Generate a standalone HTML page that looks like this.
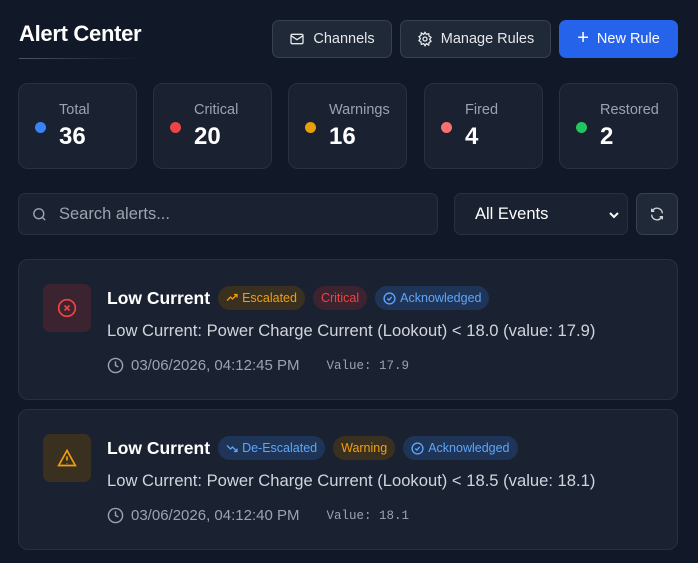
<!DOCTYPE html><html><head><style>
*{box-sizing:border-box;margin:0;padding:0}
body{width:698px;height:563px;background:#111827;font-family:"Liberation Sans",sans-serif;color:#e5e7eb;position:relative;overflow:hidden}
.abs{position:absolute}
.btn{position:absolute;top:20px;height:38px;border:1px solid #374151;background:#1f2937;border-radius:7px;display:flex;align-items:center;justify-content:center;gap:8px;font-size:14.5px;color:#e5e7eb}
.stat{position:absolute;top:83px;height:86px;width:119px;background:#1a2130;border:1px solid #273140;border-radius:10px}
.stat .dot{position:absolute;left:16px;top:38px;width:11px;height:11px;border-radius:50%}
.stat .l{position:absolute;left:40px;top:18px;font-size:14.5px;color:#9ca3af}
.stat .n{position:absolute;left:40px;top:39px;font-size:24px;font-weight:bold;color:#fff}
.card{position:absolute;left:18px;width:660px;height:141px;background:#1a2130;border:1px solid #273140;border-radius:10px}
.ib{position:absolute;left:24px;top:24px;width:48px;height:48px;border-radius:7px;display:flex;align-items:center;justify-content:center}
.t{position:absolute;left:88px;top:26px;display:flex;align-items:center;gap:8px}
.t b{font-size:17.5px;color:#fff;margin-right:0}
.pill{height:24px;border-radius:12px;padding:0 8px;font-size:12.5px;display:flex;align-items:center;gap:4px}
.d{position:absolute;left:88px;top:61px;font-size:16.6px;color:#d1d5db}
.m{position:absolute;left:88px;top:97px;font-size:15px;color:#9ca3af;display:flex;align-items:center;gap:7px}
.m code{font-family:"Liberation Mono",monospace;font-size:12.5px;margin-left:20px}
</style></head><body>
<div class="abs" style="left:19px;top:21px;font-size:22px;font-weight:bold;color:#fff;letter-spacing:-0.3px">Alert Center</div>
<div class="abs" style="left:19px;top:58px;width:122px;height:1px;background:linear-gradient(90deg,#4b5563,#111827)"></div>
<div class="btn" style="left:272px;width:120px"><svg width="16" height="16" viewBox="0 0 24 24" fill="none" stroke="#e5e7eb" stroke-width="2"><rect x="3" y="5" width="18" height="14" rx="2"/><path d="M3 7l9 6 9-6"/></svg>Channels</div>
<div class="btn" style="left:400px;width:151px"><svg width="16" height="16" viewBox="0 0 24 24" fill="none" stroke="#e5e7eb" stroke-width="2"><circle cx="12" cy="12" r="3"/><path d="M12 2l2 3 3.5-1 .5 3.5 3 2-2 3 2 3-3 2-.5 3.5L14 19l-2 3-2-3-3.5 1L6 16.5l-3-2 2-3-2-3 3-2L6.5 3 10 5z"/></svg>Manage Rules</div>
<div class="btn" style="left:559px;width:119px;background:#2563eb;border-color:#2563eb;color:#fff"><span style="font-size:20px;line-height:1;margin-top:-2px">+</span>New Rule</div>

<div class="stat" style="left:18px"><div class="dot" style="background:#3b82f6"></div><div class="l">Total</div><div class="n">36</div></div>
<div class="stat" style="left:153px"><div class="dot" style="background:#ef4444"></div><div class="l">Critical</div><div class="n">20</div></div>
<div class="stat" style="left:288px"><div class="dot" style="background:#e5a00d"></div><div class="l">Warnings</div><div class="n">16</div></div>
<div class="stat" style="left:424px"><div class="dot" style="background:#f87171"></div><div class="l">Fired</div><div class="n">4</div></div>
<div class="stat" style="left:559px"><div class="dot" style="background:#22c55e"></div><div class="l">Restored</div><div class="n">2</div></div>

<div class="abs" style="left:18px;top:193px;width:420px;height:42px;background:#1a2130;border:1px solid #273140;border-radius:7px"><svg class="abs" style="left:12px;top:12px" width="17" height="17" viewBox="0 0 24 24" fill="none" stroke="#9ca3af" stroke-width="2"><circle cx="11" cy="11" r="7"/><path d="M20 20l-4-4"/></svg><span class="abs" style="left:40px;top:11px;font-size:16.5px;color:#9ca3af">Search alerts...</span></div>
<div class="abs" style="left:454px;top:193px;width:174px;height:42px;background:#1a2130;border:1px solid #273140;border-radius:7px"><span class="abs" style="left:20px;top:11px;font-size:16.5px;color:#fff">All Events</span><svg class="abs" style="left:154px;top:17px" width="10" height="8" viewBox="0 0 10 8"><path d="M1 2l4 4 4-4" fill="none" stroke="#fff" stroke-width="2"/></svg></div>
<div class="abs" style="left:636px;top:193px;width:42px;height:42px;background:#1f2937;border:1px solid #374151;border-radius:7px;display:flex;align-items:center;justify-content:center"><svg width="16" height="16" viewBox="0 0 24 24" fill="none" stroke="#d1d5db" stroke-width="2"><path d="M20 11a8 8 0 0 0-14-5L4 8M4 4v4h4M4 13a8 8 0 0 0 14 5l2-2M20 20v-4h-4"/></svg></div>

<div class="card" style="top:259px">
<div class="ib" style="background:#3b2330"><svg width="20" height="20" viewBox="0 0 24 24" fill="none" stroke="#ef4444" stroke-width="2"><circle cx="12" cy="12" r="10"/><path d="M9 9l6 6M15 9l-6 6"/></svg></div>
<div class="t"><b>Low Current</b><span class="pill" style="background:#3a3020;color:#f59e0b"><svg width="12" height="12" viewBox="0 0 24 24" fill="none" stroke="#f59e0b" stroke-width="2.5"><path d="M2 17l7-7 4 4 9-9M16 5h6v6"/></svg>Escalated</span><span class="pill" style="background:#3b2330;color:#ef4444">Critical</span><span class="pill" style="background:#1e3558;color:#60a5fa"><svg width="13" height="13" viewBox="0 0 24 24" fill="none" stroke="#60a5fa" stroke-width="2.5"><circle cx="12" cy="12" r="10"/><path d="M8 12l3 3 5-6"/></svg>Acknowledged</span></div>
<div class="d">Low Current: Power Charge Current (Lookout) &lt; 18.0 (value: 17.9)</div>
<div class="m"><svg width="17" height="17" viewBox="0 0 24 24" fill="none" stroke="#9ca3af" stroke-width="2"><circle cx="12" cy="12" r="10"/><path d="M12 6v6l4 2"/></svg>03/06/2026, 04:12:45 PM<code>Value: 17.9</code></div>
</div>
<div class="card" style="top:409px">
<div class="ib" style="background:#3a3020"><svg width="20" height="20" viewBox="0 0 24 24" fill="none" stroke="#f59e0b" stroke-width="2"><path d="M12 3L2 21h20z"/><path d="M12 10v5M12 18v.5"/></svg></div>
<div class="t"><b>Low Current</b><span class="pill" style="background:#1e3558;color:#60a5fa"><svg width="12" height="12" viewBox="0 0 24 24" fill="none" stroke="#60a5fa" stroke-width="2.5"><path d="M2 7l7 7 4-4 9 9M16 19h6v-6"/></svg>De-Escalated</span><span class="pill" style="background:#3a3020;color:#f59e0b">Warning</span><span class="pill" style="background:#1e3558;color:#60a5fa"><svg width="13" height="13" viewBox="0 0 24 24" fill="none" stroke="#60a5fa" stroke-width="2.5"><circle cx="12" cy="12" r="10"/><path d="M8 12l3 3 5-6"/></svg>Acknowledged</span></div>
<div class="d">Low Current: Power Charge Current (Lookout) &lt; 18.5 (value: 18.1)</div>
<div class="m"><svg width="17" height="17" viewBox="0 0 24 24" fill="none" stroke="#9ca3af" stroke-width="2"><circle cx="12" cy="12" r="10"/><path d="M12 6v6l4 2"/></svg>03/06/2026, 04:12:40 PM<code>Value: 18.1</code></div>
</div>
</body></html>
